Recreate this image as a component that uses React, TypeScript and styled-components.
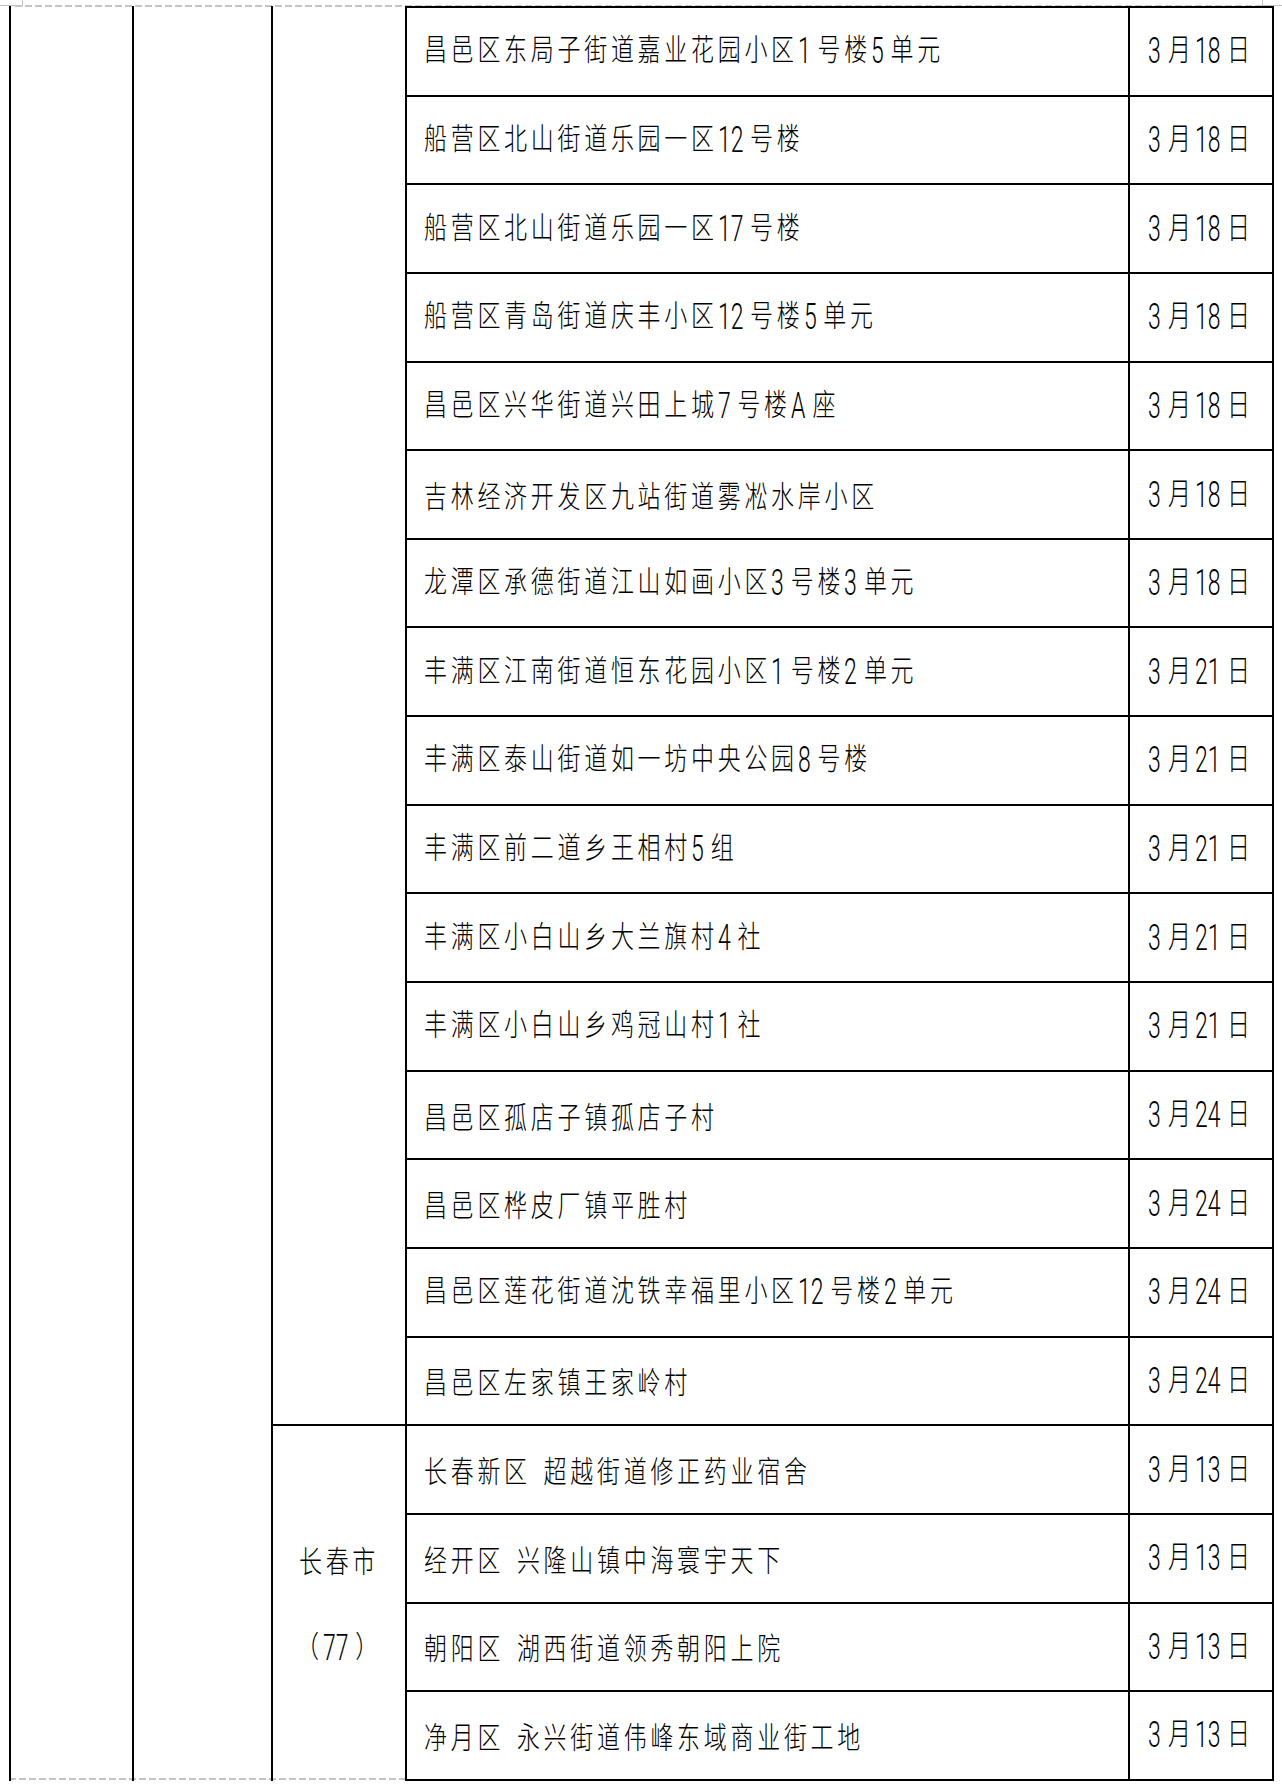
import React from "react";
import styled, { createGlobalStyle } from "styled-components";

const GlobalStyle = createGlobalStyle`
  html, body { margin: 0; padding: 0; background: #fff; }
  body { font-family: "Noto Sans CJK SC", "Noto Sans", sans-serif; color: #000; }
`;

const Page = styled.div`
  position: relative;
  width: 1282px;
  height: 1788px;
  box-sizing: border-box;
  padding: 6px 0 0 9px;
  overflow: hidden;
  background: #fff;
`;

const CropMark = styled.div<{ $side: "left" | "right" }>`
  position: absolute;
  top: 0;
  height: 5px;
  border-bottom: 1.5px solid #bdbdbd;
  ${(p) =>
    p.$side === "left"
      ? "left: 0; width: 22px; border-right: 1.5px solid #bdbdbd;"
      : "right: 0; width: 19px; border-left: 1.5px solid #bdbdbd;"}
`;

const DashedRule = styled.div<{ $top: number; $left: number; $width: number }>`
  position: absolute;
  top: ${(p) => p.$top}px;
  left: ${(p) => p.$left}px;
  width: ${(p) => p.$width}px;
  height: 2px;
  background: repeating-linear-gradient(
    to right,
    #c4c4c4 0 7px,
    transparent 7px 10px
  );
`;

const Table = styled.div`
  position: relative;
  z-index: 1;
  display: flex;
  align-items: stretch;
  width: 1265px;
`;

const LINE = "2px solid #000";
const ROW_H = 88.65;

const EmptyColumn = styled.div<{ $width: number; $first?: boolean }>`
  box-sizing: border-box;
  width: ${(p) => p.$width}px;
  flex: none;
  border-right: ${LINE};
  ${(p) => (p.$first ? `border-left: ${LINE};` : "")}
`;

const CityColumn = styled.div`
  box-sizing: border-box;
  width: 134px;
  flex: none;
  display: flex;
  flex-direction: column;
  border-right: ${LINE};
`;

const CityFiller = styled.div`
  flex: 1;
  border-bottom: ${LINE};
`;

const CityCell = styled.div`
  height: ${ROW_H * 4}px;
  display: flex;
  flex-direction: column;
  align-items: center;
  justify-content: center;
`;

const CityLine = styled.div`
  height: 88px;
  display: flex;
  align-items: center;
  justify-content: center;
`;

const Rows = styled.div`
  display: flex;
  flex-direction: column;
  width: 867px;
  flex: none;
`;

const Row = styled.div`
  box-sizing: border-box;
  display: flex;
  height: ${ROW_H}px;
  border-bottom: ${LINE};
  &:first-child {
    height: ${ROW_H + 2}px;
    border-top: ${LINE};
  }
`;

const PlaceCell = styled.div`
  box-sizing: border-box;
  width: 723px;
  flex: none;
  display: flex;
  align-items: center;
  padding-left: 17px;
  border-right: ${LINE};
`;

const DateCell = styled.div`
  box-sizing: border-box;
  width: 144px;
  flex: none;
  display: flex;
  align-items: center;
  justify-content: center;
  border-right: ${LINE};
`;

const Txt = styled.span`
  display: inline-block;
  font-family: "Noto Sans CJK SC", "Noto Sans", sans-serif;
  font-size: 23px;
  font-weight: 300;
  letter-spacing: 3.7px;
  word-spacing: 4px;
  line-height: 1;
  white-space: pre;
  color: #000;
  transform: scaleY(1.3);
`;

const DIGIT_ADV = 28 * 0.5615;
const SQUEEZE = 0.82;

const Num = styled.span<{ $gap: boolean; $n: number }>`
  display: inline-block;
  font-family: Roboto, "Liberation Sans", sans-serif;
  font-size: 28px;
  font-weight: 300;
  letter-spacing: 0;
  vertical-align: -2px;
  transform: scaleX(${SQUEEZE});
  transform-origin: left center;
  margin-right: ${(p) =>
    (p.$gap ? 7 : 0) - p.$n * DIGIT_ADV * (1 - SQUEEZE)}px;
`;

function Mixed({ text }: { text: string }) {
  const parts = text.split(/([A-Za-z0-9]+)/).filter((s) => s.length > 0);
  return (
    <Txt>
      {parts.map((part, i) => {
        if (/^[A-Za-z0-9]+$/.test(part)) {
          const next = parts[i + 1];
          const gap = !!next && !next.startsWith(" ");
          return (
            <Num key={i} $gap={gap} $n={part.length}>
              {part}
            </Num>
          );
        }
        return <React.Fragment key={i}>{part}</React.Fragment>;
      })}
    </Txt>
  );
}

const rows: [string, string][] = [
  ["昌邑区东局子街道嘉业花园小区1号楼5单元", "3月18日"],
  ["船营区北山街道乐园一区12号楼", "3月18日"],
  ["船营区北山街道乐园一区17号楼", "3月18日"],
  ["船营区青岛街道庆丰小区12号楼5单元", "3月18日"],
  ["昌邑区兴华街道兴田上城7号楼A座", "3月18日"],
  ["吉林经济开发区九站街道雾凇水岸小区", "3月18日"],
  ["龙潭区承德街道江山如画小区3号楼3单元", "3月18日"],
  ["丰满区江南街道恒东花园小区1号楼2单元", "3月21日"],
  ["丰满区泰山街道如一坊中央公园8号楼", "3月21日"],
  ["丰满区前二道乡王相村5组", "3月21日"],
  ["丰满区小白山乡大兰旗村4社", "3月21日"],
  ["丰满区小白山乡鸡冠山村1社", "3月21日"],
  ["昌邑区孤店子镇孤店子村", "3月24日"],
  ["昌邑区桦皮厂镇平胜村", "3月24日"],
  ["昌邑区莲花街道沈铁幸福里小区12号楼2单元", "3月24日"],
  ["昌邑区左家镇王家岭村", "3月24日"],
  ["长春新区 超越街道修正药业宿舍", "3月13日"],
  ["经开区 兴隆山镇中海寰宇天下", "3月13日"],
  ["朝阳区 湖西街道领秀朝阳上院", "3月13日"],
  ["净月区 永兴街道伟峰东域商业街工地", "3月13日"],
];

export default function App() {
  return (
    <>
      <GlobalStyle />
      <Page>
        <CropMark $side="left" />
        <CropMark $side="right" />
        <DashedRule $top={5} $left={15} $width={1247} />
        <DashedRule $top={1778} $left={9} $width={400} />
        <Table>
          <EmptyColumn $width={125} $first />
          <EmptyColumn $width={139} />
          <CityColumn>
            <CityFiller />
            <CityCell>
              <CityLine>
                <Mixed text="长春市" />
              </CityLine>
              <CityLine>
                <Mixed text="（77）" />
              </CityLine>
            </CityCell>
          </CityColumn>
          <Rows>
            {rows.map(([place, date], i) => (
              <Row key={i}>
                <PlaceCell>
                  <Mixed text={place} />
                </PlaceCell>
                <DateCell>
                  <Mixed text={date} />
                </DateCell>
              </Row>
            ))}
          </Rows>
        </Table>
      </Page>
    </>
  );
}
